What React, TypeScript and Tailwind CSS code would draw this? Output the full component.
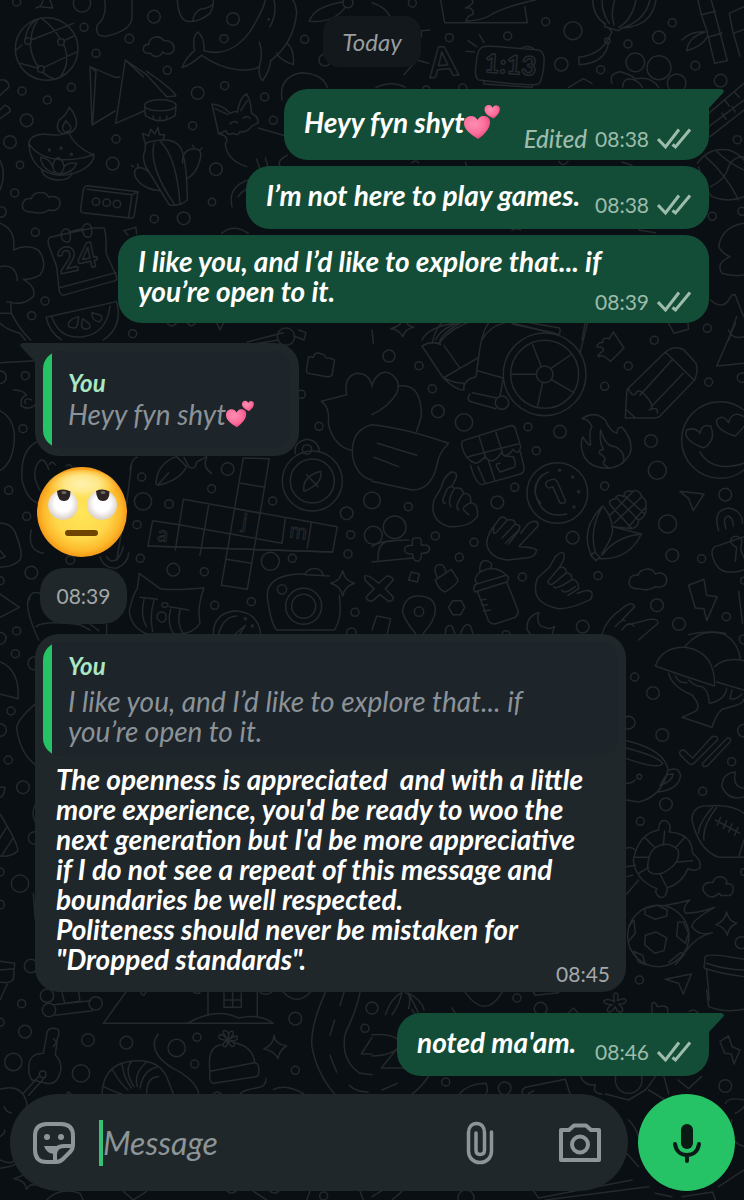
import { useState } from "react";
import type { ReactNode } from "react";

type Patch = {
  x: number;
  y: number;
  dots: number[][];
  paths: string[];
};

const CLOUD = "c-22 2 -32 -10 -28 -24 c4 -16 16 -18 26 -16 c6 -22 42 -26 52 -4 c20 -8 36 4 34 20 c-2 18 -18 22 -34 18 c-14 12 -38 10 -50 6z";
const SPARK = "c6 22 12 30 36 38 c-24 8 -30 16 -36 38 c-6 -22 -12 -30 -36 -38 c24 -8 30 -16 36 -38z";

// Wallpaper doodles, one group per region, drawn at three times their size
const PATCHES: Patch[] = [
  {
    x: 0,
    y: 0,
    dots: [
      [252, 82, 12], [462, 50, 19], [246, 10, 26], [50, 6, 12], [388, 116, 13], [288, 160, 12], [502, 211, 12],
      [66, 273, 12], [214, 262, 12], [142, 300, 12], [80, 361, 19], [30, 426, 19], [578, 377, 12], [348, 417, 12],
      [593, 279, 19], [699, 57, 19], [672, 116, 12], [674, 257, 12], [794, 291, 12], [820, 361, 12], [914, 118, 12],
      [975, 180, 18], [338, 491, 19], [648, 508, 19], [60, 495, 11], [44, 579, 12], [636, 606, 11], [463, 657, 12],
      [551, 655, 19], [106, 697, 12], [135, 903, 12], [95, 947, 12], [398, 1001, 12],
      [140, 147, 94], [84, 123, 10], [183, 126, 10], [123, 207, 10], [288, 605, 11], [320, 608, 11], [351, 612, 11],
      [1044, 8, 15], [148, 450, 3], [183, 445, 3], [214, 463, 3], [806, 58, 2],
    ],
    paths: [
      "M94 120L220 70M90 130Q95 175 115 200M180 116Q160 80 125 56M190 132Q215 185 180 232M192 122L222 108M76 118Q80 80 105 62M60 190L115 205M132 202L232 155M66 135L48 150M95 118Q90 95 115 56M128 217Q145 232 165 238",
      "M270 200L345 232L360 232M270 200L276 375L345 333M288 214L278 368M288 214L270 200M376 180L347 370L432 333M376 180L440 224L500 290L528 288Q520 268 440 214M376 180L430 230",
      "M434 316c0-22 94-22 94 0c0 22-94 22-94 0zM434 318L436 346Q480 378 526 346L528 318M460 348v10M480 350v10M500 348v10",
      "M208 322Q200 345 178 360Q162 390 190 402Q228 400 230 370Q228 345 208 322zM198 362q-18 22-4 34q22 0 18-16zM190 402Q182 408 130 402Q90 405 86 430C90 490 125 522 180 526C235 525 282 495 282 466Q225 440 208 402M86 430C130 500 250 480 282 462M125 512Q135 540 180 540Q212 538 215 520",
      "M122 472Q150 475 158 500Q160 480 174 472Q190 480 192 500Q205 485 230 490Q220 520 180 522Q125 515 122 472zM158 500Q162 518 176 522Q192 515 192 500",
      "M436 432L428 400L446 408L452 388L464 402L474 382L478 404L494 404L488 424M436 450Q430 425 460 424Q515 410 540 440Q560 470 562 600Q540 620 508 615L436 498Q425 470 436 450zM462 430Q445 500 524 614M480 424Q530 470 540 612M548 490Q545 450 580 446Q610 445 600 480Q590 520 562 535M445 515Q430 500 410 504Q395 520 415 545Q440 570 482 572M400 500l-6-4M416 500l-4-8M600 450l6-6M582 444l-4-8",
      "M262 557L414 575L402 650Q398 656 390 654L248 638Q240 636 242 626L250 570Q252 558 262 557zM262 568L396 584L386 652M396 584L414 575",
      "M96 636" + CLOUD,
      "M440 160c-16-6-12-28 6-26c0-20 28-34 46-12c22-2 32 12 30 28c-6 14-22 16-34 6c-8 20-30 14-36 4z",
      "M314 0Q322 50 292 75Q282 112 322 108Q398 90 396 50V0M532 0Q535 50 555 62Q590 72 630 40Q642 20 640 0M578 64Q580 40 600 28Q630 24 640 12",
      "M546 202Q570 196 605 166Q660 205 720 210Q760 212 778 200Q775 230 788 242Q810 210 812 182Q880 130 890 40Q888 10 878 0M546 202Q560 170 584 152Q575 110 594 96Q615 115 612 152Q690 175 750 95Q790 30 796 0M778 200Q790 160 778 126M822 0Q832 40 810 80M860 128Q885 150 880 194Q840 180 830 160",
      "M928 64Q940 20 1030 5M928 64Q1000 70 1036 22M846 300Q835 230 905 218Q970 222 982 262",
      "M656 402L636 312Q670 315 690 340Q710 330 712 338Q720 290 740 282Q752 300 755 340Q775 350 775 368Q752 378 745 390Q725 400 720 394Q715 410 700 400Q680 408 678 392zM684 344L646 326M722 332L742 302M690 372q10-12 22-4M730 355q10-10 20 0M660 402Q690 410 676 432Q680 480 740 500M775 384L850 406M770 478l10 30M796 474l8 26M862 466Q830 480 840 500",
      "M696 620Q680 550 770 534M714 590Q725 575 742 565M665 700Q700 670 745 700",
      "M150 712L182 704M208 696L246 686M276 684L312 684Q320 700 318 760L350 830Q352 838 346 842L196 884Q184 890 178 874L170 800L148 740Q140 718 150 712zM176 864L348 818M190 690q14-10 20 8q4 24-6 28q-16 2-20-16q-2-14 6-20zM254 674q14-8 20 8q4 26-6 30q-16 2-20-18q-2-14 6-20z",
      "M138 952L350 905Q370 980 310 1020M138 952Q150 1000 185 1020M156 952Q180 1020 250 1010Q320 1000 330 918M236 950q-36 10-30 30q22 10 26-4zM248 956q-10 30 10 32q20-4 8-18zM276 938q-2 24 22 28q14-10 4-20z",
      "M372 692L408 682L410 702M372 692L384 705M0 670Q50 690 40 750Q80 730 115 750Q145 790 120 825Q95 840 70 838Q110 860 100 890Q70 920 20 905M0 800Q50 790 52 842M32 905L34 940Q60 990 92 1020M0 940H34M0 970Q20 990 60 1000L76 1020M0 240L14 240Q30 250 26 262L0 286M0 330L14 316Q30 318 30 335L0 356M0 482Q20 520 0 570M0 620q20 0 18 20q-4 12-18 12",
      "M108 24L122 18L130 0M122 20L158 24L150 0M500 968q16 20 30 0M560 966q12 22 28 2M650 968L660 990L672 966",
    ],
  },
  {
    x: 372,
    y: 0,
    dots: [
      [121, 9, 12], [232, 113, 12], [407, 108, 12], [521, 65, 12], [603, 92, 27], [768, 132, 12], [861, 112, 19],
      [901, 68, 12], [568, 193, 20], [686, 209, 12], [970, 197, 13], [1046, 242, 19], [790, 187, 28], [861, 203, 36],
      [914, 250, 28], [1096, 419, 12], [1021, 649, 12], [272, 264, 12], [163, 268, 10], [706, 122, 8], [1110, 634, 12],
    ],
    paths: [
      "M0 8Q40 20 54 50M206 0L218 68L466 68L458 20M282 64Q285 48 304 42Q304 20 280 24Q310 10 300 0M282 64Q340 60 360 42Q400 20 490 0M148 92L174 90M148 92L148 110M96 224L134 180L170 190",
      "M322 104L336 128M288 122L314 140M282 154L308 156M330 142Q340 136 400 142L500 150Q520 158 516 190Q512 240 500 252Q480 260 320 240Q306 230 312 200Q314 150 330 142zM450 144Q470 132 490 150M334 242L336 252L480 262L484 254",
      "M662 0Q664 50 700 72L698 80L740 92L750 84Q840 80 852 0M690 0Q690 40 712 70M728 0Q715 40 726 74M792 0Q780 60 740 82M834 0Q820 60 752 84M712 86L720 96L706 122M706 122Q680 165 620 172L622 194Q700 190 710 128",
      "M978 0L988 44L1004 90L1028 190L1066 182L1050 120L1034 60L1018 0M988 44L1030 34M1012 110L1050 100M1072 40L1084 100L1104 168M1072 40L1116 20M1084 100L1116 88M930 120Q960 92 1000 96Q950 110 944 152Q990 140 1006 110",
      "M720 250Q710 220 745 215Q780 225 790 236Q840 228 860 262M752 262Q752 240 770 236Q800 238 812 264M590 262L634 236L660 250M1010 340L1116 250M1010 380L1116 300M1014 410L1116 330M1058 300l14 18M1088 276l14 16M1050 340l12 18M1080 320l10 16M12 262Q60 240 100 262",
      "M976 490Q1010 440 1070 450Q1100 460 1116 480M980 500Q1000 570 1020 590Q1070 610 1116 590M1030 450Q1070 490 1116 510M1000 470Q1060 520 1100 600M1016 560Q1060 540 1070 500Q1080 470 1116 470",
      "M1116 670Q1050 680 1040 740Q1050 760 1074 770Q1030 790 1050 820Q1080 830 1116 825M1016 900Q1050 930 1070 900Q1080 880 1090 885Q1110 940 1116 950M1094 950L1070 1020",
      "M120 488q10-10 20 0M280 486L284 498M560 484q14 20 28 0M750 486l30 10M800 690l50 8M420 690q16-8 26 0",
      "M150 1020Q170 980 250 970M190 1020Q210 980 270 966M330 1020Q350 980 400 968M420 972L550 1000M640 966L630 1020",
    ],
  },
  {
    x: 0,
    y: 330,
    dots: [
      [76, 137, 12], [0, 142, 19], [69, 296, 12], [26, 481, 12], [80, 559, 12], [429, 514, 26],
      [507, 522, 13], [425, 441, 12], [683, 417, 19], [635, 476, 12], [818, 513, 12], [1040, 550, 19], [957, 289, 12],
      [904, 193, 12], [411, 584, 12], [421, 685, 12], [520, 719, 19], [613, 725, 12], [811, 694, 27], [877, 685, 12],
      [1052, 614, 12], [1044, 672, 12], [94, 728, 19], [0, 752, 12], [644, 826, 12], [754, 815, 12], [1065, 847, 12],
      [211, 690, 13], [846, 778, 14], [911, 829, 54], [911, 829, 36], [937, 453, 90],
      [937, 453, 66], [921, 358, 14], [858, 20, 26], [1054, 908, 14], [757, 888, 3], [736, 866, 3],
    ],
    paths: [
      "M550 508L1012 590L998 666L444 648L458 572L538 584L550 508",
      "M444 648L998 666M730 384L664 766L742 778L808 386L730 384M722 460L795 472M706 536L782 550M694 612L770 626M678 688L756 700M626 526L600 676M538 584L526 660M856 566L846 640M934 578L922 654M538 584L846 640",
      "M912 484Q905 440 962 424Q970 460 912 484zM920 434L954 470M886 370Q880 335 922 328Q955 332 958 362M742 36L850 8M750 44L836 30M882 18L912 30L918 8L896 0",
      "M926 80L940 82Q944 66 958 70L972 74Q975 86 988 84L1004 90L996 136Q990 142 980 140L924 130Q918 126 920 116z",
      "M964 214L1040 194Q1030 140 1070 130Q1110 130 1116 170M964 214Q990 230 985 280Q1000 350 1058 362M1116 284Q1050 300 1058 380Q1070 440 1116 450",
      "M468 462Q470 400 530 380L560 410Q540 450 476 466zM476 462L506 428M552 382L568 412Q588 420 590 396L620 380M620 384Q606 410 635 430",
      "M40 180Q70 180 80 196Q60 200 64 228Q90 244 110 220M76 220Q70 200 95 210M0 98L108 92M0 242Q50 270 42 340Q36 400 0 422M110 336Q60 360 66 450Q80 510 116 520M146 418Q130 370 110 405Q95 440 120 480M148 404q8-14 18 0M198 408q10-8 18 2M395 400L380 520L350 690M94 600Q80 660 130 670M412 382Q395 385 390 420",
      "M300 680Q310 715 350 715Q385 700 386 668M320 680Q330 700 352 688Q366 670 370 650",
      "M418 730L480 776Q520 780 556 778L612 774Q590 830 600 880Q580 910 540 912H440Q390 890 388 840Q400 790 412 776zM420 802L472 808M508 830L566 840M432 808Q420 860 440 890M462 812Q448 860 458 904M512 838Q500 880 520 910M540 840Q530 880 548 908M486 820q20-6 18 8q-18 12-18-8M486 846q-18 0-14 20q14 20 26 2q4-20-12-22",
      "M640 912Q640 850 705 842Q775 846 782 912M656 912Q670 860 710 858M706 912L736 886L720 912",
      "M842 742Q890 728 920 734L988 738M1018 796Q1028 860 1004 900H830Q812 880 802 800Q800 760 842 742M916 730Q930 712 950 716Q966 720 970 736M1028 722" + SPARK,
      "M0 580Q40 580 50 620Q70 670 60 690Q40 710 0 712M0 662L16 680L0 686M0 792L58 832L0 862M88 800Q70 830 116 930M120 790Q90 780 88 810M108 890Q130 870 240 884L270 900M270 882L296 902M320 884V920",
    ],
  },
  {
    x: 372,
    y: 320,
    dots: [
      [51, 108, 18], [141, 137, 12], [181, 206, 12], [198, 274, 19], [276, 307, 26], [468, 321, 12], [564, 335, 19],
      [493, 392, 12], [428, 502, 12], [376, 547, 19], [109, 560, 12], [190, 648, 12], [306, 667, 12], [262, 712, 12],
      [451, 771, 12], [602, 653, 19], [678, 767, 12], [698, 498, 12], [698, 199, 12], [769, 138, 12], [847, 61, 12],
      [1006, 25, 12], [1010, 186, 12], [837, 363, 19], [856, 451, 27], [887, 612, 27], [901, 706, 19], [989, 716, 12],
      [1060, 524, 19], [855, 856, 19], [921, 912, 19], [1063, 890, 12], [632, 920, 19], [68, 622, 34], [4, 646, 27],
      [0, 541, 25], [518, 163, 124], [518, 163, 102], [518, 163, 25], [390, 248, 20], [556, 519, 91], [1044, 360, 115],
      [141, 875, 14], [563, 451, 3], [602, 471, 3], [620, 515, 3], [606, 561, 3], [1110, 173, 14], [402, 944, 12], [1116, 782, 10],
    ],
    paths: [
      "M482 74L508 140M600 102L536 146M416 163H493M606 218L540 180M512 188L496 262M150 78Q180 60 206 74Q190 50 280 0M150 78L214 174Q250 210 276 210Q270 180 312 170L320 112Q330 20 360 0M214 174L320 112M216 76L262 142M180 70Q190 20 220 0M200 70Q240 20 310 0M316 152L394 174L384 228M214 174Q250 190 276 190M294 222Q280 240 300 246L372 266M302 218L374 234M646 10L624 100M424 10L560 44Q568 34 562 24L430 0",
      "M0 196Q16 150 50 158Q90 180 74 220Q50 260 0 284M82 198Q150 190 148 290L134 334M0 314Q100 324 230 370Q200 400 196 430Q180 510 120 510L0 484M16 370L134 406M6 412L80 440",
      "M274 362L416 317Q428 316 430 326L446 380Q440 410 424 388Q400 420 388 398Q360 440 340 410Q320 430 310 430Q280 420 270 380Q266 364 274 362zM288 410L438 372M322 352L342 416M370 332L392 400M296 436Q310 490 330 494L446 462Q458 456 456 440L444 392M318 440L340 490M350 424L368 480M374 440Q370 430 384 430M374 440L384 456L426 442Q434 434 424 410L398 408",
      "M506 550Q470 510 510 465M530 456Q490 470 490 520Q510 600 584 582M524 500Q516 486 530 482Q550 470 558 490L580 540Q582 550 570 550Q562 550 560 540L542 500Q530 508 524 500z",
      "M630 296Q670 270 700 300Q715 335 735 340Q735 320 750 322Q785 360 775 400Q750 445 700 445Q640 440 630 390Q625 370 632 350Q650 380 656 374Q650 330 660 320Q650 296 630 296zM686 330Q680 365 695 388Q680 390 682 400Q700 410 700 420Q684 430 710 444M686 330Q700 380 730 380Q765 400 752 430",
      "M766 208L880 96Q910 74 936 90L972 130Q980 150 968 180L862 290Q850 296 840 294H760L764 220zM880 96L966 180M900 120L804 226M934 160L838 260M790 222Q800 200 825 232Q850 262 832 270Q860 258 856 280M770 208Q780 230 790 222M764 270L788 292",
      "M692 94Q670 110 682 110Q690 100 716 124L756 84L724 36L712 56Q690 50 692 68Q680 66 674 80Q700 80 692 94zM1034 138L1116 130M1034 138L1090 10M1070 30Q1080 60 1116 50M890 10L906 40L950 28L948 8M55 26Q80 26 92 50Q100 26 125 22M55 26Q86 20 90 0M125 22Q104 16 100 0M0 30L4 70",
      "M996 384Q930 360 944 330Q970 320 984 340Q990 310 1016 318Q1034 360 996 384zM1090 348Q1030 330 1034 300Q1050 280 1070 308Q1080 270 1116 290M1090 348L1116 320M984 396Q1020 460 1116 430",
      "M252 475Q258 455 238 456Q215 470 208 502L186 540Q170 600 230 620Q290 624 316 590Q320 550 296 548Q300 520 275 520Q270 500 248 505Q230 490 220 520Q205 550 220 550M248 505Q225 540 236 560M275 520Q245 560 260 570M296 548Q270 560 275 570L290 584M252 475L240 498",
      "M498 618Q500 595 470 610L446 640M498 618L442 678M442 680Q480 680 494 690Q490 715 460 714L410 720Q350 715 344 670Q345 640 376 605Q390 580 406 600L374 636Q360 650 366 620M406 600Q430 596 430 612L390 654M430 612Q450 616 440 630L400 670M410 672L442 630",
      "M576 702Q570 690 550 710L532 742L496 775Q470 850 560 866Q600 866 656 838Q670 810 640 812L616 820M576 702Q580 720 560 745Q580 735 584 758Q600 760 600 778Q620 780 620 806L588 826M560 745L528 784Q530 800 545 790L584 758M545 800Q550 812 600 778M570 810Q576 826 610 800",
      "M660 708Q620 630 692 558Q720 590 720 620L808 642Q770 720 684 716M692 558Q650 630 670 696M720 620Q730 640 690 700M808 642Q730 650 690 706M656 706L668 696L684 712L672 722zM716 556Q705 540 730 536Q735 520 755 530Q755 510 780 514Q800 505 810 530Q825 540 822 560Q825 590 800 600Q800 620 780 626L724 620M716 556L780 626M734 534L800 600M756 526L816 580M810 530L726 610M784 514L716 584M822 560L770 620",
      "M0 680Q20 660 110 660M18 720Q16 660 60 664M0 726L124 714M98 688Q98 676 122 676Q116 650 136 654Q150 650 148 676Q176 672 172 690Q170 700 148 700Q150 724 134 724Q122 720 122 702Q98 704 98 688",
      "M110 780L118 756L142 762L136 786zM190 780L238 748L258 780Q260 790 220 816Q200 810 190 780zM196 772Q180 740 200 734Q216 730 222 756M-22 768Q-10 762 20 790L44 768Q60 768 64 780L40 806L64 832Q64 844 50 844L24 824L0 844Q-14 844 -18 832L6 806L-20 782zM14 888L56 896L46 940M14 888L0 930M130 940Q90 890 92 870Q100 826 141 828Q190 830 190 870Q190 900 154 940M230 862L242 842H268L278 862L266 884H242z",
      "M324 756Q320 720 344 722Q368 730 354 746M316 790Q300 780 324 756Q370 730 408 770Q412 780 404 786L308 816Q300 800 316 790M308 794L402 766M316 814L350 904Q360 916 376 910L430 892Q440 884 438 870L404 786M326 840L342 838M330 856L346 854M334 874L356 870",
      "M500 878Q460 890 466 930L476 944M500 878Q490 920 520 922Q530 930 548 920L540 944M220 944Q220 910 240 918L250 944M264 944Q280 900 296 920L304 944M690 944Q700 900 750 866Q780 840 788 860L750 900M770 914L834 898Q860 895 858 910L800 960M730 920Q750 896 760 902M750 930Q770 900 786 918",
      "M950 796L996 778L1004 826L1036 830L1004 902L996 866L970 864zM924 514L996 522L964 572L950 536zM800 806" + CLOUD,
      "M1030 680L1116 650M1030 680Q1010 690 1030 730Q1050 770 1116 750M1040 632Q1020 570 1070 564Q1110 570 1112 610M1062 626Q1050 590 1070 588Q1084 596 1084 618M1090 724L1094 682Q1070 670 1078 655Q1094 640 1110 660L1106 690L1116 714M1100 814L1112 910M950 944Q1000 930 1060 940",
    ],
  },
  {
    x: 0,
    y: 620,
    dots: [
      [50, 33, 12], [46, 101, 12], [33, 273, 12], [0, 330, 19], [25, 420, 12], [69, 502, 19], [0, 756, 12],
      [60, 791, 26], [0, 854, 13], [104, 130, 20], [104, 654, 19], [0, 55, 18],
    ],
    paths: [
      "M0 125Q60 150 54 236L0 222M108 250Q50 300 50 325Q60 400 108 436M0 502Q20 500 14 506Q12 530 0 532M0 582Q60 680 52 694Q30 712 0 708M20 622L0 654M38 656L6 706M108 550Q90 580 108 610M100 820L106 900",
    ],
  },
  {
    x: 372,
    y: 620,
    dots: [
      [788, 171, 12], [843, 219, 19], [871, 345, 19], [770, 308, 19], [882, 553, 19], [805, 604, 12], [1079, 425, 12],
      [992, 514, 12], [802, 1080, 12], [1116, 58, 14], [1116, 332, 19], [1108, 968, 18], [802, 470, 7], [859, 948, 92],
      [1116, 756, 10],
    ],
    paths: [
      "M850 138Q870 80 940 82Q1030 95 1028 198Q940 170 850 138zM940 78Q990 20 1060 44Q1100 70 1106 120M1028 140Q1060 110 1116 122M1034 186L1116 210M890 160Q900 200 960 225Q990 260 970 274L930 292L1020 322Q1034 280 1050 268L1086 258Q1116 250 1116 236M910 168Q920 190 945 188M950 180Q970 200 990 200Q1010 210 1012 250Q1060 240 1064 205M1080 210L1074 236Q1090 242 1110 222",
      "M924 404Q920 390 936 390L962 414L1020 350Q1040 346 1036 360L966 430Q960 436 950 430zM992 430L1066 354Q1080 352 1074 366L1006 438Q990 444 992 430M1090 456Q1050 460 1050 500Q1070 545 1116 530M1090 456Q1080 500 1116 505",
      "M764 362Q880 390 888 450Q870 530 800 546L764 540M764 384Q860 410 872 430Q860 450 764 416M892 450Q920 440 926 466Q920 510 856 516M884 464L904 462Q900 486 864 496zM764 490Q780 490 790 480",
      "M960 600Q960 560 1000 558Q1080 550 1116 580M960 600Q980 690 1040 712H1116M1022 562Q980 610 980 640M1034 562Q990 620 996 660M1030 600L1104 640M1046 592l-10 24M1064 602l-10 24M1080 612l-10 24M1098 622l-10 24M1116 660L1100 712",
      "M860 630Q860 600 880 602Q900 610 892 636Q960 640 962 700Q990 720 984 744Q970 756 948 746Q930 790 886 804Q884 836 864 832Q846 820 854 806Q790 780 784 720Q800 640 860 630zM828 730Q820 770 870 760Q930 730 918 690Q890 660 850 682Q830 700 828 730zM878 634L874 676M940 650L910 684M962 722L916 726M886 804L864 762M800 760L830 742M786 712L828 712M820 654L850 684M764 684Q780 680 790 690M764 740L790 736M764 770L782 766M764 822L800 780",
      "M852 936L884 954L876 992L848 1000L818 974L820 946zM818 866L856 856L886 870L884 888L850 898L820 884zM918 906L934 906L950 940L940 970L914 948zM770 920L786 900L790 940L770 964M784 994L812 1006L820 1034L800 1026zM890 1028L926 998L938 1002L910 1034M880 856Q920 850 954 840Q930 860 940 880Q980 880 1028 862Q960 900 960 920Q980 950 1022 938Q970 950 940 996",
      "M1006 826q-20-16-10-30q10-12 26-8q10-26 36-14q10 8 4 18q24-4 22 18q-4 22-24 16q-12 4-20-6q-16 18-34 6zM1064 876q4 26 30 34q-24 10-28 36q-8-26-34-32q26-10 32-38zM880 1078L958 1062L934 1122L920 1090zM1000 1010Q1010 998 1116 1018M1000 1010L996 1044Q1040 1060 1116 1070M1004 1030Q1060 1050 1116 1050M1004 1050L1012 1140",
    ],
  },
  {
    x: 0,
    y: 960,
    dots: [
      [65, 131, 12], [75, 215, 19], [264, 240, 19], [379, 248, 19], [530, 264, 26], [591, 232, 12], [584, 312, 12],
      [40, 306, 26], [243, 340, 26], [886, 176, 19], [886, 331, 12], [1095, 205, 12], [141, 107, 20],
      [147, 150, 20], [287, 130, 20], [128, 343, 10], [93, 18, 20], [971, 708, 12], [0, 187, 12],
    ],
    paths: [
      "M378 96L310 190H820Q780 160 716 174Q650 140 562 190M624 96V164M772 96V168M672 98V142H724V98M672 120H724M698 98V142M422 96Q430 115 438 96M166 166L278 152M160 134L272 122M186 98L194 130L240 124L236 96M580 96Q590 104 600 98M850 96Q890 140 932 96M780 98Q800 108 816 96",
      "M0 4L44 10L40 58Q30 72 0 66M0 30L42 26M22 72L0 120M142 214Q150 200 174 208Q180 220 172 236L166 284Q190 310 180 340Q170 376 140 370L96 360Q80 340 90 300Q100 280 130 280zM160 236l10 10l-10 14M120 346L70 400M136 350L86 406M0 388Q60 370 78 420Q84 440 76 454M12 440q10 20 22 18M0 530Q16 520 14 510M0 600Q40 620 52 590M0 625Q50 620 62 600",
      "M306 402Q310 320 380 306Q470 290 500 350L520 402M338 330Q360 370 384 390M366 312Q370 350 394 384M396 304Q370 330 402 380M440 306Q400 340 412 380M470 322Q430 330 420 384M476 350Q440 350 440 400M312 380Q350 400 366 402M474 222Q440 270 510 320Q590 360 596 402M720 402Q730 390 770 384Q800 380 798 354M820 388Q860 370 912 402M200 402Q204 390 212 402M640 402Q650 390 664 402",
      "M630 334Q620 260 664 254M704 248Q760 260 764 308M630 334L764 308Q780 310 776 340Q776 348 768 350L640 370Q626 368 630 334z",
      "M684 240q-34 0-26-14q8-8 26 14q-24-30-8-28q14 2 8 28q2-32 14-26q8 8-14 26q28-20 28-6q0 12-28 6q26 8 18 18q-12 6-18-18q-2 24-12 20q-10-8 12-20z",
      "M822 226q2 26 38 32q-22 12-26 38q-12-24-42-30q28-10 30-40zM976 98Q930 200 936 260Q950 340 1004 402M1080 98Q1070 150 1036 220Q1020 300 1080 340L1116 344M1032 98L1020 136M1004 180L990 226M990 286L1010 336M1048 376Q1070 396 1104 396M1116 232L1084 282H1116",
      "M42 656Q80 645 86 630M42 656Q75 660 80 688Q90 670 104 676M140 720Q180 680 240 700L250 720M370 694L400 720L440 694M920 720L930 694M1080 694L1090 720M680 692q14 14 30 0M760 694l40 26M810 694q14 10 26 0",
    ],
  },
  {
    x: 372,
    y: 980,
    dots: [
      [435, 54, 12], [221, 306, 12], [398, 325, 19], [1060, 318, 19], [0, 84, 18], [506, 86, 19],
      [770, 300, 40], [282, 654, 24],
    ],
    paths: [
      "M40 104Q60 50 90 38Q80 80 60 104M110 86Q120 40 100 38M120 88Q130 110 140 100L110 40Q150 60 156 90M240 84L250 100M280 38Q340 120 390 38M484 36L490 46L560 38M590 98L604 84L618 98M728 66Q720 40 732 38Q742 40 736 62Q760 50 762 62Q760 74 740 72Q760 90 748 96Q736 98 730 80Q716 104 706 92Q706 80 722 74Q694 74 696 62Q710 54 728 66zM840 98V70Q850 62 856 80Q880 74 886 84L888 98M1004 30L1010 80Q1060 100 1116 88M1044 184L1070 168L1080 200L1104 210L1086 252L1078 222L1058 220zM952 94Q966 84 978 98",
      "M0 164Q60 160 80 180M0 228Q60 226 82 200M80 200L28 264H100M30 330L76 310M170 288Q150 320 120 342M262 342Q290 310 342 310Q350 330 342 342M452 342Q446 330 460 322L580 298L594 342M470 340l16-8M626 290Q640 320 670 314Q660 340 690 342M850 290Q830 320 820 330L770 360L700 342M876 290L890 342M918 300L950 326L988 290M830 330L880 360M1116 360Q1070 350 1060 370M1090 400Q1110 390 1116 380M1080 420Q1060 480 1116 500M770 420Q790 440 800 470M764 520L800 560",
      "M484 632L500 654L780 600M520 660L830 620M850 640L900 650M930 650L1022 636L1030 660M1116 570L1040 620M0 650L30 632M60 660L90 634",
    ],
  },
];

function Wallpaper() {
  return (
    <svg
      className="absolute inset-0 h-full w-full"
      viewBox="0 0 744 1200"
      preserveAspectRatio="xMidYMid slice"
      fill="none"
      stroke="#24292c"
      strokeWidth="4.5"
      strokeLinecap="round"
      strokeLinejoin="round"
      aria-hidden="true"
    >
      {PATCHES.map((p, i) => (
        <g key={i} transform={`translate(${p.x} ${p.y}) scale(0.3333)`}>
          {p.dots.map(([cx, cy, r], j) => (
            <circle key={j} cx={cx} cy={cy} r={r} />
          ))}
          {p.paths.map((d, j) => (
            <path key={j} d={d} />
          ))}
        </g>
      ))}
      <g transform="scale(0.3333)" fontFamily="Lato, sans-serif" fontWeight="700">
        <text x="180" y="822" fontSize="104" transform="rotate(-12 180 822)">24</text>
        <text x="1452" y="216" fontSize="78" transform="rotate(4 1452 216)">1:13</text>
        <text x="1290" y="234" fontSize="124" transform="rotate(-6 1290 234)">A</text>
      </g>
      <g transform="translate(0 330) scale(0.3333)" fontFamily="Lato, sans-serif" fontSize="64" strokeWidth="3">
        <text x="470" y="632" transform="rotate(8 470 632)">a</text>
        <text x="724" y="594" transform="rotate(8 724 594)">j</text>
        <text x="866" y="622" transform="rotate(8 866 622)">m</text>
      </g>
    </svg>
  );
}

function Hearts({ className }: { className: string }) {
  return (
    <svg className={className} viewBox="0 0 36 36" role="img" aria-label="Two hearts">
      <defs>
        <radialGradient id="heart" cx="0.4" cy="0.35" r="0.7">
          <stop offset="0" stopColor="#ff8fb4" />
          <stop offset="0.6" stopColor="#fb6d9b" />
          <stop offset="1" stopColor="#e93f7c" />
        </radialGradient>
      </defs>
      <path
        fill="url(#heart)"
        d="M14 35C6 30 0 25 0 19.500C0 15 3 12 7 12C10 12 12 13.500 13.500 16C15 13.500 17 11.500 20 12C24 12 26.500 15 26 19C25.500 25 20 31 14 35Z"
      />
      <path
        fill="url(#heart)"
        d="M29.500 14.500C24 12 20.500 9 20.500 5.500C20.500 2.500 22.500 .8 25 1C27 1.200 28 2.200 28.500 4C29.500 2 31 1 33 1.400C35.500 2 36.400 4 35.700 6.500C35 10 32 12.500 29.500 14.500Z"
      />
    </svg>
  );
}

function RollingEyes() {
  return (
    <svg className="mt-[11px] ml-0.5 size-[90px]" viewBox="0 0 90 90" role="img" aria-label="Face with rolling eyes">
      <defs>
        <radialGradient id="face" cx="0.5" cy="0.5" r="0.5">
          <stop offset="0" stopColor="#ffe65a" />
          <stop offset="0.6" stopColor="#fed84a" />
          <stop offset="0.86" stopColor="#fdb92c" />
          <stop offset="1" stopColor="#f59a17" />
        </radialGradient>
        <radialGradient id="shine" cx="0.5" cy="0.4" r="0.5">
          <stop offset="0" stopColor="#fff2ae" />
          <stop offset="0.5" stopColor="#ffee9a" stopOpacity="0.8" />
          <stop offset="1" stopColor="#ffe45e" stopOpacity="0" />
        </radialGradient>
        <radialGradient id="eye" cx="0.5" cy="0.45" r="0.55">
          <stop offset="0.5" stopColor="#ffffff" />
          <stop offset="1" stopColor="#d8cdc6" />
        </radialGradient>
      </defs>
      <circle cx="45" cy="45" r="45" fill="url(#face)" />
      <ellipse cx="45" cy="20" rx="36" ry="17" fill="url(#shine)" />
      <circle cx="26" cy="38" r="15" fill="url(#eye)" />
      <circle cx="65" cy="38" r="15" fill="url(#eye)" />
      <path fill="#2b2423" d="M20 24Q26.500 21 33.500 24.500Q33.500 34 27 34Q20.500 34 20 24Z" />
      <path fill="#2b2423" d="M59 24Q65.500 21 72.500 24.500Q72.500 34 66 34Q59.500 34 59 24Z" />
      <ellipse cx="27" cy="25.500" rx="2.500" ry="1.500" fill="#6e6360" />
      <ellipse cx="66" cy="25.500" rx="2.500" ry="1.500" fill="#6e6360" />
      <rect x="28" y="63" width="33" height="6" rx="3" fill="#6f4300" />
    </svg>
  );
}

function Ticks() {
  return (
    <svg
      className="h-[22px] w-[34px]"
      viewBox="0 0 34 22"
      fill="none"
      stroke="#9dbcac"
      strokeWidth="3"
      role="img"
      aria-label="Delivered"
    >
      <path d="M1 11L8.500 19L22 1.500M15.500 16.500L18.500 19L33 1.500" />
    </svg>
  );
}

function Meta({ time, edited }: { time: string; edited?: boolean }) {
  return (
    <div className="flex shrink-0 items-center gap-2 text-[21px] leading-7 font-normal text-[#9dbcac] not-italic">
      {edited && <span className="text-2xl leading-7 font-medium italic">Edited</span>}
      <time>{time}</time>
      <Ticks />
    </div>
  );
}

function Tail({ side }: { side: "left" | "right" }) {
  return side === "right" ? (
    <svg className="absolute top-0 left-full h-[22px] w-[15px]" viewBox="0 0 15 22" fill="#144d37" aria-hidden="true">
      <path d="M0 0H12Q16.500 .5 14 4L0 19V22Z" />
    </svg>
  ) : (
    <svg className="absolute top-0 right-full h-[22px] w-[15px]" viewBox="0 0 15 22" fill="#1f272a" aria-hidden="true">
      <path d="M15 0H3Q-1.500 .5 1 4L15 19V22Z" />
    </svg>
  );
}

function Quote({ children, className }: { children: ReactNode; className: string }) {
  return (
    <blockquote className="flex overflow-hidden rounded-[18px] bg-[#1d242a]">
      <span className="w-[9px] shrink-0 bg-[#25c266]" />
      <div className={className}>
        <div className="text-2xl leading-7 font-bold text-[#a9e8c2] italic">You</div>
        {children}
      </div>
    </blockquote>
  );
}

export default function App() {
  const [draft, setDraft] = useState("");

  return (
    <div className="relative flex min-h-screen flex-col bg-[#0a0f13] font-['Lato','Noto_Sans',sans-serif]">
      <Wallpaper />

      <main className="relative flex flex-1 flex-col px-[35px] pt-4 text-[28px] leading-[30px] font-bold text-white italic">
        <div className="flex h-[51px] w-[98px] items-center justify-center self-center rounded-2xl bg-[#12181c] text-2xl font-normal text-[#989d9f]">
          Today
        </div>

        {/* Sent */}
        <div className="mt-[22px] flex flex-col items-end gap-1.5">
          <div className="relative flex min-w-[425px] items-end justify-between rounded-3xl rounded-tr-none bg-[#144d37] pt-3.5 pr-[18px] pb-[7px] pl-5">
            <p className="flex items-center pb-3 leading-[38px]">
              Heyy fyn shyt
              <Hearts className="size-9" />
            </p>
            <Meta time="08:38" edited />
            <Tail side="right" />
          </div>
          <div className="flex min-w-[463px] items-end justify-between rounded-3xl bg-[#144d37] pt-3.5 pr-[18px] pb-2.5 pl-5">
            <p className="pb-[9px]">I’m not here to play games.</p>
            <Meta time="08:38" />
          </div>
          <div className="flex w-full max-w-[591px] flex-col rounded-3xl bg-[#144d37] pt-[11px] pr-[18px] pb-[7px] pl-5">
            <p className="whitespace-pre-wrap">{"I like you, and I’d like to explore that... if\nyou’re open to it."}</p>
            <div className="-mt-[18px] self-end">
              <Meta time="08:39" />
            </div>
          </div>
        </div>

        {/* Received */}
        <div className="mt-5 flex flex-col items-start">
          <div className="relative min-w-[264px] rounded-3xl rounded-tl-none bg-[#1f272a] p-2">
            <Quote className="pt-[18px] pr-8 pb-[17px] pl-4">
              <p className="flex items-center leading-[34px] font-normal text-[#8b9298]">
                Heyy fyn shyt
                <Hearts className="size-7" />
              </p>
            </Quote>
            <Tail side="left" />
          </div>

          <RollingEyes />
          <time className="mt-[11px] ml-[5px] flex h-14 w-[87px] items-center justify-center rounded-3xl bg-[#1f272a] text-[21px] font-normal text-[#a3a8aa] not-italic">
            08:39
          </time>

          <div className="mt-2.5 flex w-full max-w-[591px] flex-col rounded-3xl bg-[#1f272a] p-2 pb-1">
            <Quote className="py-2.5 pr-8 pl-4">
              <p className="mt-1.5 font-normal whitespace-pre-wrap text-[#8b9298]">
                {"I like you, and I’d like to explore that... if\nyou’re open to it."}
              </p>
            </Quote>
            <p className="mt-2 pl-[13px] whitespace-pre-wrap">
              {`The openness is appreciated  and with a little
more experience, you'd be ready to woo the
next generation but I'd be more appreciative
if I do not see a repeat of this message and
boundaries be well respected.`}
            </p>
            <div className="flex items-end justify-between pr-2 pl-[13px]">
              <p className="pb-3.5 whitespace-pre-wrap">{'Politeness should never be mistaken for\n"Dropped standards".'}</p>
              <time className="shrink-0 text-[21px] leading-7 font-normal text-[#a3a8aa] not-italic">08:45</time>
            </div>
          </div>
        </div>

        <div className="mt-[21px] flex flex-col items-end">
          <div className="relative flex min-w-[312px] items-end justify-between rounded-3xl rounded-tr-none bg-[#144d37] pt-3.5 pr-[18px] pb-2.5 pl-5">
            <p className="pb-[9px]">noted ma'am.</p>
            <Meta time="08:46" />
            <Tail side="right" />
          </div>
        </div>
      </main>

      <footer className="relative mt-[18px] flex items-center gap-2.5 pr-[9px] pb-[9px] pl-2.5">
        <div className="flex h-[97px] min-w-0 flex-1 items-center rounded-full bg-[#1f272a] pr-[26px] pl-[22px] text-[#8d9598]">
          <button type="button" aria-label="Stickers" className="shrink-0">
            <svg className="size-[44px]" viewBox="0 0 44 44" fill="none" stroke="currentColor" strokeWidth="4" strokeLinejoin="round">
              <path d="M15 3H29Q41 3 41 15V24Q41 28 38 31L31 38Q28 41 24 41H15Q3 41 3 29V15Q3 3 15 3Z" />
              <path d="M23 40V34Q23 25 32 25H41" />
              <path d="M12 25H27Q23 28 22 33Q14 32 12 25Z" fill="currentColor" stroke="none" />
              <circle cx="15" cy="16" r="3" fill="currentColor" stroke="none" />
              <circle cx="29" cy="16" r="3" fill="currentColor" stroke="none" />
            </svg>
          </button>
          <span className="ml-[23px] h-[46px] w-1 shrink-0 bg-[#35c273]" />
          <input
            type="text"
            aria-label="Message"
            value={draft}
            onChange={(e) => setDraft(e.target.value)}
            placeholder="Message"
            className="h-14 min-w-0 flex-1 bg-transparent text-[32px] text-white italic placeholder-[#8d9598] outline-none"
          />
          <button type="button" aria-label="Attach" className="shrink-0">
            <svg className="h-[44px] w-[28px]" viewBox="0 0 28 44" fill="none" stroke="currentColor" strokeWidth="3.500" strokeLinecap="round">
              <path d="M25.500 11V30C25.500 37 20.500 41.500 14 41.500C7.500 41.500 2.500 37 2.500 30V12C2.500 6 6 2.500 10.500 2.500C15.500 2.500 18.500 6 18.500 12V29C18.500 32 16.500 33.500 14 33.500C11.500 33.500 10 32 10 29V12" />
            </svg>
          </button>
          <button type="button" aria-label="Camera" className="ml-16 shrink-0">
            <svg className="h-[40px] w-[44px]" viewBox="0 0 44 40" fill="none" stroke="currentColor" strokeWidth="4" strokeLinejoin="round">
              <path d="M3 7H11L16 2.500H28L33 7H41V37H3Z" />
              <circle cx="22" cy="21.500" r="8" />
            </svg>
          </button>
        </div>
        <button
          type="button"
          aria-label="Record voice message"
          className="flex size-[97px] shrink-0 items-center justify-center rounded-full bg-[#25c266]"
        >
          <svg className="h-[40px] w-[30px]" viewBox="0 0 30 40" fill="none" stroke="#0a1a14" strokeWidth="4" strokeLinecap="round">
            <rect x="9" y="1" width="12" height="25" rx="6" fill="#0a1a14" stroke="none" />
            <path d="M3 21C4 28 8.500 32 15 32C21.500 32 26 28 27 21M15 32V38" />
          </svg>
        </button>
      </footer>
    </div>
  );
}
